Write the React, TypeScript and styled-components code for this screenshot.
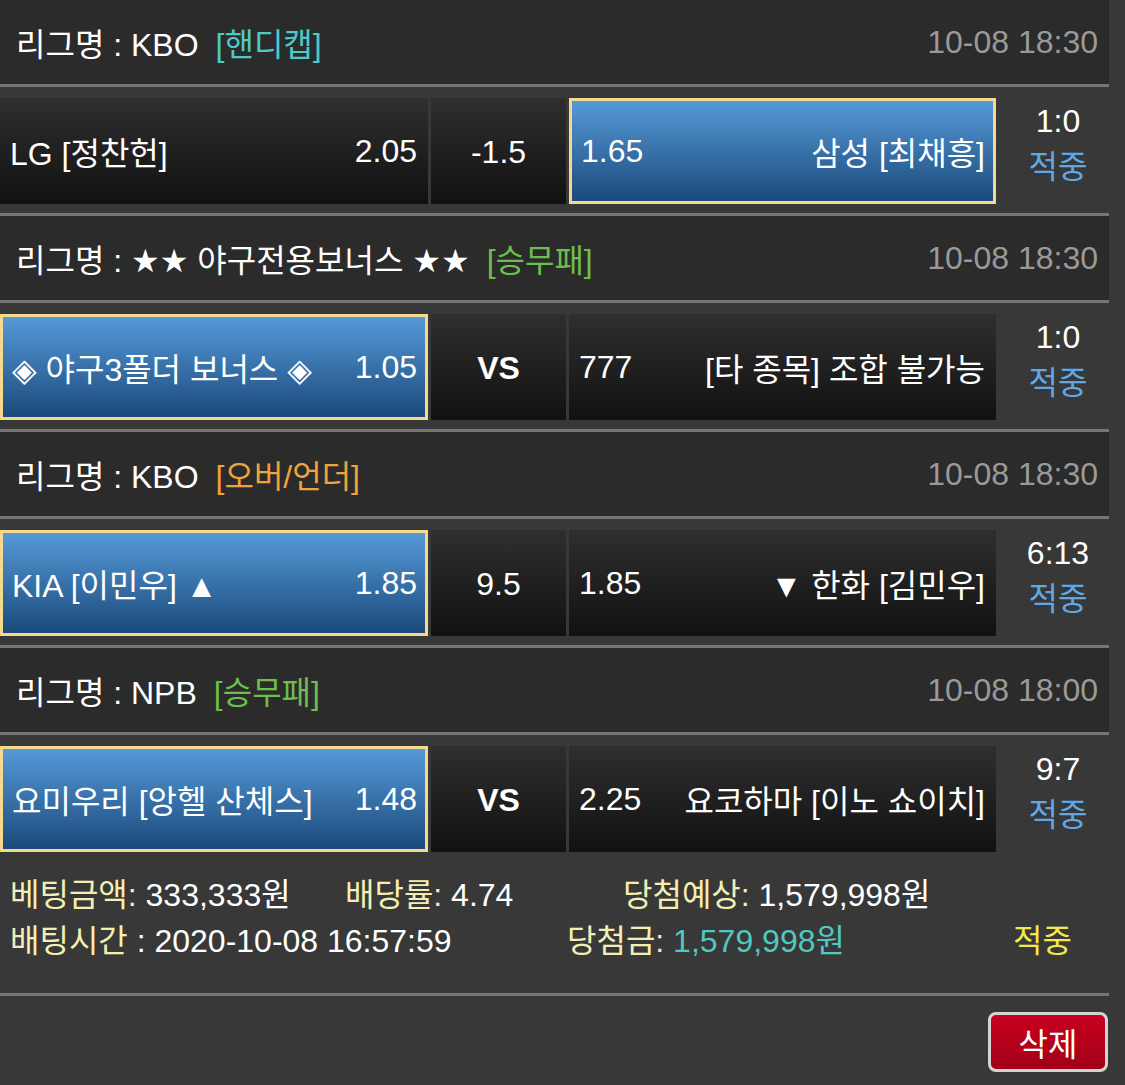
import styled, { createGlobalStyle } from 'styled-components'

const GlobalStyle = createGlobalStyle`
  body {
    margin: 0;
    background: #383838;
    font-family: "Liberation Sans", "DejaVu Sans", "Noto Sans CJK KR", sans-serif;
    color: #fff;
  }
`

type Side = { name: string, odds: string }
type Match = {
  league: string
  type: string
  typeColor: string
  time: string
  home: Side
  center: string
  centerBold?: boolean
  away: Side
  picked: 'home' | 'away'
  score: string
}

const matches: Match[] = [
  {
    league: 'KBO', type: '[핸디캡]', typeColor: '#4ec9c9', time: '10-08 18:30',
    home: { name: 'LG [정찬헌]', odds: '2.05' }, center: '-1.5',
    away: { name: '삼성 [최채흥]', odds: '1.65' }, picked: 'away', score: '1:0',
  },
  {
    league: '★★ 야구전용보너스 ★★', type: '[승무패]', typeColor: '#6cbf4c', time: '10-08 18:30',
    home: { name: '◈ 야구3폴더 보너스 ◈', odds: '1.05' }, center: 'VS', centerBold: true,
    away: { name: '[타 종목] 조합 불가능', odds: '777' }, picked: 'home', score: '1:0',
  },
  {
    league: 'KBO', type: '[오버/언더]', typeColor: '#f0a23c', time: '10-08 18:30',
    home: { name: 'KIA [이민우] ▲', odds: '1.85' }, center: '9.5',
    away: { name: '▼ 한화 [김민우]', odds: '1.85' }, picked: 'home', score: '6:13',
  },
  {
    league: 'NPB', type: '[승무패]', typeColor: '#6cbf4c', time: '10-08 18:00',
    home: { name: '요미우리 [앙헬 산체스]', odds: '1.48' }, center: 'VS', centerBold: true,
    away: { name: '요코하마 [이노 쇼이치]', odds: '2.25' }, picked: 'home', score: '9:7',
  },
]

export default function App() {
  return (
    <>
      <GlobalStyle />
      <Slip>
        {matches.map((m, i) => (
          <div key={i}>
            <LeagueBar>
              <span>
                리그명 : {m.league}
                <BetType $color={m.typeColor}>{m.type}</BetType>
              </span>
              <Time>{m.time}</Time>
            </LeagueBar>
            <MatchRow $last={i === matches.length - 1}>
              <Pick $active={m.picked === 'home'}>
                <span>{m.home.name}</span>
                <span>{m.home.odds}</span>
              </Pick>
              <Line $bold={m.centerBold}>{m.center}</Line>
              <Pick $active={m.picked === 'away'}>
                <span>{m.away.odds}</span>
                <span>{m.away.name}</span>
              </Pick>
              <Result>
                <span>{m.score}</span>
                <Hit>적중</Hit>
              </Result>
            </MatchRow>
          </div>
        ))}

        <Summary>
          <SummaryLine>
            <Stat $w={335}><Label>베팅금액:</Label> 333,333원</Stat>
            <Stat $w={278}><Label>배당률:</Label> 4.74</Stat>
            <Stat><Label>당첨예상:</Label> 1,579,998원</Stat>
          </SummaryLine>
          <SummaryLine>
            <Stat $w={557}><Label>배팅시간</Label> : 2020-10-08 16:57:59</Stat>
            <Stat $w={446}><Label>당첨금:</Label> <Payout>1,579,998원</Payout></Stat>
            <Stat><Status>적중</Status></Stat>
          </SummaryLine>
        </Summary>

        <Actions>
          <DeleteButton type="button">삭제</DeleteButton>
        </Actions>
      </Slip>
    </>
  )
}

const Slip = styled.div`
  width: 1109px;
  background: #383838;
  font-size: 32px;
`

const LeagueBar = styled.div`
  height: 84px;
  display: flex;
  align-items: center;
  justify-content: space-between;
  padding: 0 11px 0 16px;
  background: #2b2b2b;
  border-bottom: 3px solid #767676;
`

const BetType = styled.span<{ $color: string }>`
  color: ${p => p.$color};
  margin-left: 17px;
`

const Time = styled.span`
  color: #9a9a9a;
`

const MatchRow = styled.div<{ $last?: boolean }>`
  display: grid;
  grid-template-columns: 428px 135px 427px 1fr;
  column-gap: 3px;
  padding: 11px 0 9px;
  background: #383838;
  border-bottom: ${p => (p.$last ? 'none' : '3px solid #767676')};
`

const Cell = styled.div`
  height: 106px;
  box-sizing: border-box;
  display: flex;
  align-items: center;
  background: linear-gradient(#2f2f2f, #111111);
`

const Pick = styled(Cell)<{ $active?: boolean }>`
  justify-content: space-between;
  padding: 0 11px 0 10px;
  white-space: nowrap;
  ${p => p.$active && `
    background: linear-gradient(#5599d8, #1b4a7b);
    border: 3px solid #f5d98d;
    padding: 0 8px 0 9px;
  `}
`

const Line = styled(Cell)<{ $bold?: boolean }>`
  justify-content: center;
  font-weight: ${p => (p.$bold ? 'bold' : 'normal')};
  padding-top: 2px;
`

const Result = styled.div`
  display: flex;
  flex-direction: column;
  align-items: center;
  justify-content: center;
  line-height: 46px;
  padding: 0 0 14px 8px;
`

const Hit = styled.span`
  color: #5ea8e8;
`

const Summary = styled.div`
  padding: 11px 10px 29px;
  border-bottom: 3px solid #767676;
`

const SummaryLine = styled.div`
  display: flex;
  line-height: 46px;
  white-space: nowrap;
`

const Stat = styled.span<{ $w?: number }>`
  flex: ${p => (p.$w ? `0 0 ${p.$w}px` : '1')};
`

const Label = styled.span`
  color: #f3efb4;
`

const Payout = styled.span`
  color: #4fc9c1;
`

const Status = styled.span`
  color: #f2e84e;
`

const Actions = styled.div`
  display: flex;
  justify-content: flex-end;
  padding: 16px 1px 13px;
`

const DeleteButton = styled.button`
  width: 120px;
  height: 60px;
  border: 3px solid #d4d4d4;
  border-radius: 8px;
  background: linear-gradient(#c9001f, #a20018);
  color: #fff;
  font-family: inherit;
  font-size: 32px;
  padding: 0;
`
